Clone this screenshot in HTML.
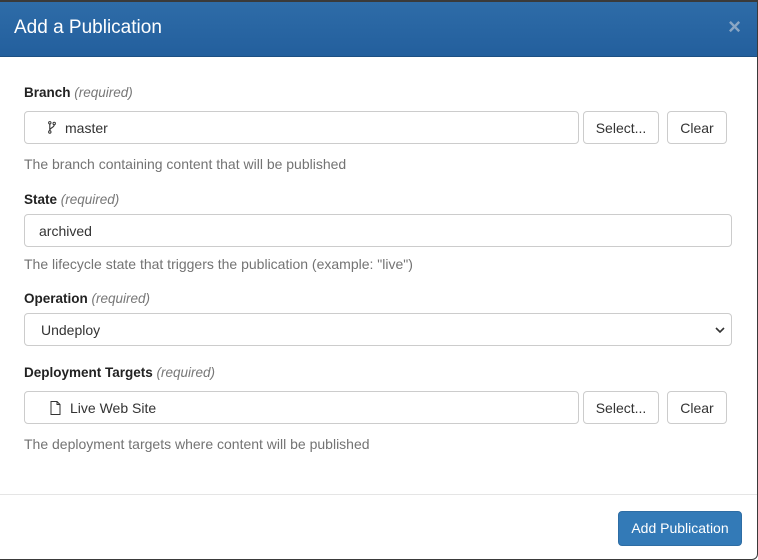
<!DOCTYPE html>
<html><head><style>
*{box-sizing:border-box;margin:0;padding:0}
body{width:758px;height:560px;background:#fff;font-family:"Liberation Sans",Arial,sans-serif;font-size:14px;color:#333;position:relative;overflow:hidden}
.m{position:absolute;left:0;top:0;width:758px;height:560px;border:1px solid #3a3a3a;border-top:2px solid #3a3a3a;border-left:none;border-radius:0 0 6px 0;overflow:hidden}
.hd{height:55px;background:linear-gradient(#2e6ca8,#235f9d);border-bottom:1px solid #1d5083;color:#fff;font-size:19px;padding:15px 0 0 14px;position:relative}
.x{position:absolute;right:16px;top:12px;font-size:22px;color:#8aa6c4;font-weight:bold}
.lbl{position:absolute;left:24px;font-size:13.5px;font-weight:bold;color:#222}
.lbl i{font-weight:normal;color:#777}
.inp{position:absolute;left:24px;height:33px;border:1px solid #ccc;border-radius:4px;padding:8px 0 0 14px;font-size:14px;color:#333;background:#fff}
.btn{position:absolute;height:33px;border:1px solid #ccc;border-radius:4px;background:#fff;font-size:14px;padding:8px 0 0;text-align:center;color:#333}
.help{position:absolute;left:24px;font-size:14px;color:#737373}
.ft{position:absolute;left:0;right:0;top:492px;border-top:1px solid #e5e5e5}
.pb{position:absolute;left:618px;top:509px;width:124px;height:35px;background:#337ab7;border:1px solid #2e6da4;border-radius:4px;color:#fff;font-size:14px;text-align:center;padding-top:8px}
</style></head><body><div class="m">
<div class="hd">Add a Publication<span class="x">×</span></div>
<div class="lbl" style="top:83px">Branch <i>(required)</i></div>
<div class="inp" style="top:109px;width:555px;padding-left:40px"><svg style="position:absolute;left:23px;top:9px" width="8" height="13" viewBox="0 0 8 13"><circle cx="1.8" cy="1.8" r="1.2" fill="none" stroke="#333"/><circle cx="1.8" cy="11" r="1.2" fill="none" stroke="#333"/><circle cx="6.2" cy="2.5" r="1.2" fill="none" stroke="#333"/><path d="M1.8 3v7 M6.2 3.7c0 3-4.4 3-4.4 5.5" fill="none" stroke="#333" stroke-width="1.1"/></svg>master</div>
<div class="btn" style="left:583px;top:109px;width:76px">Select...</div>
<div class="btn" style="left:667px;top:109px;width:60px">Clear</div>
<div class="help" style="top:154px">The branch containing content that will be published</div>
<div class="lbl" style="top:190px">State <i>(required)</i></div>
<div class="inp" style="top:212px;width:708px">archived</div>
<div class="help" style="top:254px">The lifecycle state that triggers the publication (example: "live")</div>
<div class="lbl" style="top:289px">Operation <i>(required)</i></div>
<div class="inp" style="top:311px;width:708px;padding-left:16px">Undeploy<svg style="position:absolute;right:6px;top:12px" width="10" height="8" viewBox="0 0 10 8"><path d="M1 2l4 4 4-4" fill="none" stroke="#333" stroke-width="1.6"/></svg></div>
<div class="lbl" style="top:363px">Deployment Targets <i>(required)</i></div>
<div class="inp" style="top:389px;width:555px;padding-left:24px"><svg style="position:absolute;left:25px;top:9px" width="11" height="14" viewBox="0 0 11 14"><path d="M1 .5h6l3 3v10H1z M7 .5v3h3" fill="none" stroke="#333" stroke-width="1"/></svg><span style="margin-left:21px">Live Web Site</span></div>
<div class="btn" style="left:583px;top:389px;width:76px">Select...</div>
<div class="btn" style="left:667px;top:389px;width:60px">Clear</div>
<div class="help" style="top:434px">The deployment targets where content will be published</div>
<div class="ft"></div>
<div class="pb">Add Publication</div>
</div></body></html>
